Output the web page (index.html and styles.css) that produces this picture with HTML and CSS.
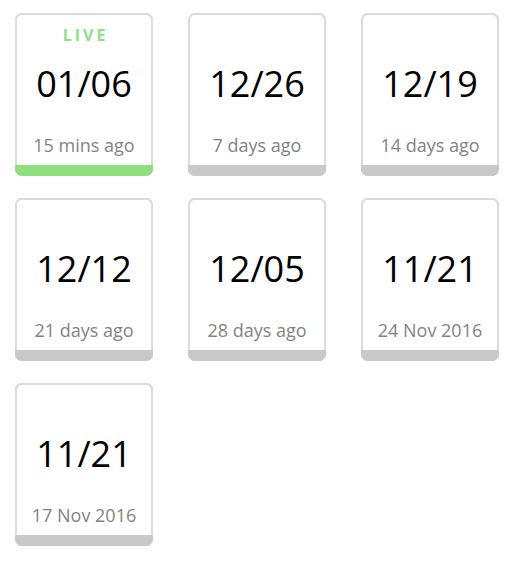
FILE: index.html
```html
<!DOCTYPE html>
<html>
<head>
<meta charset="utf-8">
<link rel="stylesheet" href="styles.css">
</head>
<body>
<div class="grid">
  <div class="card live">
    <div class="panel">
      <div class="label">LIVE</div>
      <div class="date">01/06</div>
      <div class="ago">15 mins ago</div>
    </div>
    <div class="bar"></div>
  </div>
  <div class="card">
    <div class="panel">
      <div class="label"></div>
      <div class="date">12/26</div>
      <div class="ago">7 days ago</div>
    </div>
    <div class="bar"></div>
  </div>
  <div class="card">
    <div class="panel">
      <div class="label"></div>
      <div class="date">12/19</div>
      <div class="ago">14 days ago</div>
    </div>
    <div class="bar"></div>
  </div>
  <div class="card">
    <div class="panel">
      <div class="label"></div>
      <div class="date">12/12</div>
      <div class="ago">21 days ago</div>
    </div>
    <div class="bar"></div>
  </div>
  <div class="card">
    <div class="panel">
      <div class="label"></div>
      <div class="date">12/05</div>
      <div class="ago">28 days ago</div>
    </div>
    <div class="bar"></div>
  </div>
  <div class="card">
    <div class="panel">
      <div class="label"></div>
      <div class="date">11/21</div>
      <div class="ago">24 Nov 2016</div>
    </div>
    <div class="bar"></div>
  </div>
  <div class="card">
    <div class="panel">
      <div class="label"></div>
      <div class="date">11/21</div>
      <div class="ago">17 Nov 2016</div>
    </div>
    <div class="bar"></div>
  </div>
</div>
</body>
</html>
```
FILE: styles.css
```css
html, body {
  margin: 0;
  padding: 0;
  background: #ffffff;
}

.grid {
  display: grid;
  grid-template-columns: repeat(3, 138px);
  column-gap: 35px;
  row-gap: 22px;
  padding: 13px 0 0 15px;
}

.card {
  display: flex;
  flex-direction: column;
  height: 163px;
  border-radius: 7px;
  overflow: hidden;
  background: #c9c9c9;
}

.panel {
  flex: 1;
  display: flex;
  flex-direction: column;
  align-items: center;
  background: #ffffff;
  border: 2px solid #dcdcdc;
  border-bottom: 0;
  border-radius: 7px 7px 0 0;
  font-family: "Open Sans", "Noto Sans", sans-serif;
}

.label {
  margin-top: 12px;
  height: 17px;
  line-height: 17px;
  font-size: 16px;
  font-weight: 700;
  letter-spacing: 3px;
  padding-left: 3px;
  color: #8ee088;
}

.date {
  margin-top: 20px;
  height: 40px;
  line-height: 40px;
  font-size: 36px;
  color: #000000;
}

.ago {
  margin-top: 30px;
  height: 22px;
  line-height: 22px;
  font-size: 18px;
  color: #838383;
}

.bar {
  height: 11px;
  background: #c9c9c9;
}

.live .bar {
  background: #8ee07f;
}
```
